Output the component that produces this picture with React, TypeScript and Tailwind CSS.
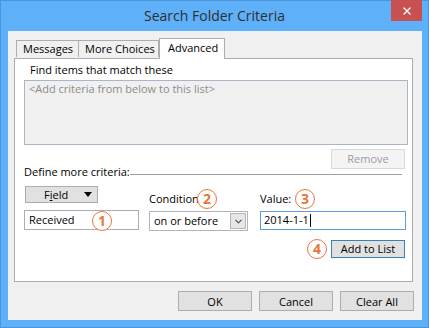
import { X, ChevronDown } from 'lucide-react';

function Badge({ n }: { n: number }) {
  return (
    <span className="w-[20px] h-[20px] rounded-full border-[1.5px] border-[#e8763a] bg-white text-[#e8763a] flex items-center justify-center text-[14px] font-bold leading-none">
      {n}
    </span>
  );
}

function Btn({ label, className = '' }: { label: string; className?: string }) {
  return (
    <div
      className={
        'h-[20px] w-[74px] bg-[#e1e1e1] border border-[#adadad] flex items-center justify-center leading-none ' +
        className
      }
    >
      {label}
    </div>
  );
}

export default function App() {
  return (
    <div className="w-[429px] h-[328px] bg-[#5eb0f9] border border-[#4b95da] flex flex-col font-['Open_Sans',sans-serif] text-[11px] text-black whitespace-nowrap">
      {/* title bar */}
      <div className="h-[30px] relative flex items-center justify-center">
        <span className="text-[14px] text-[#2f2f2f] pb-[1px]">Search Folder Criteria</span>
        <div className="absolute right-[6px] top-[-1px] w-[31px] h-[21px] bg-[#c75050] flex items-center justify-center">
          <X size={12} strokeWidth={2.5} color="#ffffff" />
        </div>
      </div>

      {/* client */}
      <div className="ml-[7px] w-[414px] h-[289px] bg-[#f0f0f0] flex flex-col pt-[7px]">
        {/* tabs */}
        <div className="flex items-end h-[20px] ml-[8px] relative z-10">
          <div className="h-[17px] pl-[6px] border-l border-t border-r border-[#adadad] flex items-center w-[63px] mb-[1px]">Messages</div>
          <div className="h-[17px] pl-[6px] border-t border-r border-[#adadad] flex items-center w-[80px] mb-[1px]">More Choices</div>
          <div className="h-[21px] -mb-[1px] pl-[8px] border-l border-t border-r border-[#adadad] bg-white flex items-center w-[66px] pb-[2px]">Advanced</div>
        </div>

        {/* panel */}
        <div className="ml-[6px] w-[399px] h-[224px] bg-white border border-[#adadad] flex flex-col pl-[9px]">
          <div className="mt-[3px] pl-[6px] leading-[16px] h-[16px]">Find items that match these</div>
          <div className="mt-[2px] w-[384px] h-[65px] bg-[#f0f0f0] border border-[#a9b6c6] pl-[4px] leading-[16px] text-[#8c8c8c]">
            &lt;Add criteria from below to this list&gt;
          </div>
          <div className="self-end mr-[7px] mt-[4px] h-[20px] w-[74px] bg-[#f4f4f4] border border-[#d9d9d9] text-[#9b9ba3] flex items-center justify-center">
            Remove
          </div>

          {/* define row */}
          <div className="flex items-start h-[16px] -mt-[5px] mr-[10px]">
            <span className="leading-[16px]">Define more criteria:</span>
            <div className="flex-1 h-px bg-[#a0a0a0] mt-[10px]" />
          </div>

          {/* field / condition / value */}
          <div className="flex items-start mt-[6px]">
            <div className="flex flex-col w-[115px] relative">
              <div className="ml-[1px] w-[73px] h-[17px] bg-[#e1e1e1] border border-[#adadad] flex items-center pl-[18px] pr-[5px]">
                <span className="leading-none">
                  F<span className="underline">i</span>eld
                </span>
                <span className="ml-auto w-0 h-0 border-l-[4px] border-r-[4px] border-t-[5px] border-l-transparent border-r-transparent border-t-black" />
              </div>
              <div className="mt-[7px] h-[20px] border border-[#abadb3] bg-white flex items-center pl-[4px]">Received</div>
              <div className="absolute left-[68px] top-[25px]">
                <Badge n={1} />
              </div>
            </div>

            <div className="flex flex-col w-[99px] ml-[10px] pt-[5px] relative">
              <div className="leading-[16px] h-[16px]">Condition</div>
              <div className="mt-[4px] h-[20px] border border-[#a9b6c6] bg-white flex items-center pl-[4px] pr-[1px]">
                <span>on or before</span>
                <div className="ml-auto w-[16px] h-[16px] bg-[#e6e6e6] border border-[#b4b4b4] flex items-center justify-center">
                  <ChevronDown size={11} strokeWidth={2.5} color="#505050" />
                </div>
              </div>
              <div className="absolute left-[48px] top-[3px]">
                <Badge n={2} />
              </div>
            </div>

            <div className="flex flex-col w-[146px] ml-[12px] pt-[5px] relative">
              <div className="leading-[16px] h-[16px]">Value:</div>
              <div className="mt-[4px] h-[19px] border border-[#569de5] bg-white flex items-center pl-[3px]">
                <span>2014-1-1</span>
                <span className="w-px h-[13px] bg-black ml-[1px]" />
              </div>
              <div className="absolute left-[35px] top-[3px]">
                <Badge n={3} />
              </div>
            </div>
          </div>

          {/* add to list */}
          <div className="flex items-center justify-end gap-[4px] mr-[7px] mt-[8px]">
            <Badge n={4} />
            <div className="h-[18px] w-[74px] bg-[#e1e1e1] border border-[#3c7fb1] flex items-center justify-center">Add to List</div>
          </div>
        </div>

        {/* bottom buttons */}
        <div className="flex justify-end gap-[7px] mr-[8px] mt-[9px]">
          <Btn label="OK" />
          <Btn label="Cancel" />
          <Btn label="Clear All" className="w-[73px]" />
        </div>
      </div>
    </div>
  );
}
